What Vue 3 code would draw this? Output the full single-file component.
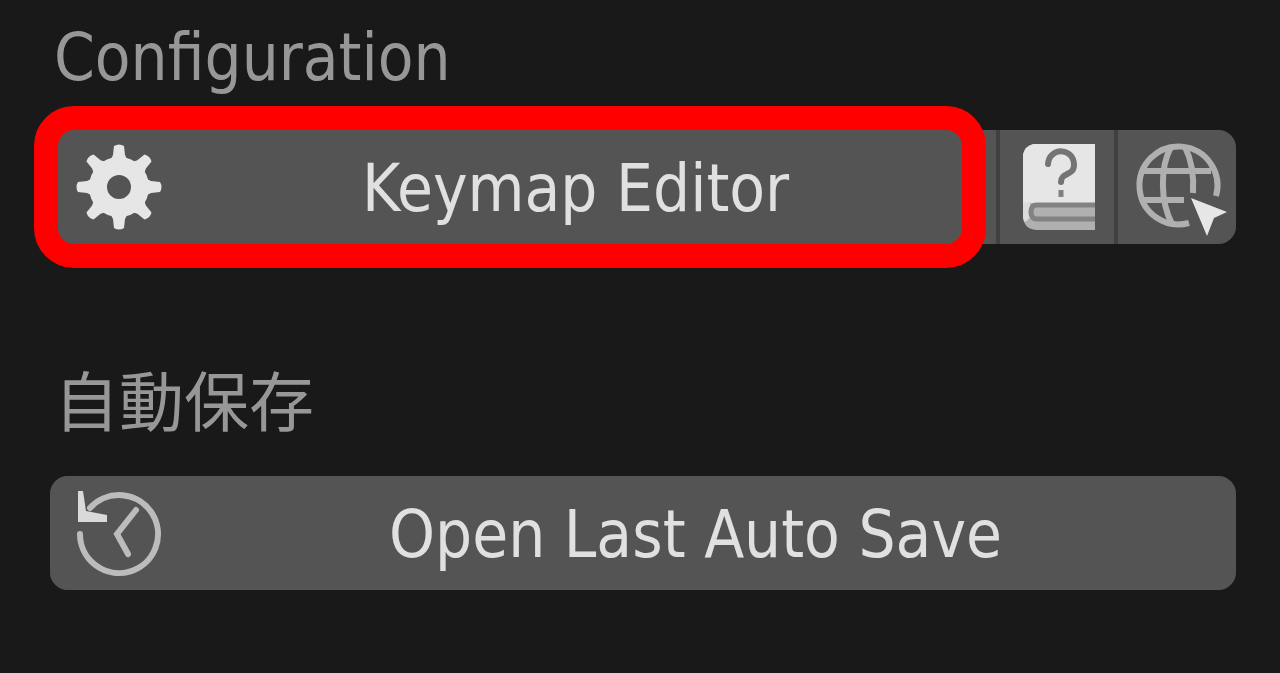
<script setup>
const spokes = [0, 45, 90, 135, 180, 225, 270, 315]
</script>

<template>
  <main class="panel">
    <section class="section">
      <h2 class="heading">Configuration</h2>
      <div class="group">
        <button type="button" class="btn wide marked">
          <svg class="icon" viewBox="0 0 84 84" aria-hidden="true">
            <g fill="#e6e6e6">
              <path
                v-for="angle in spokes"
                :key="angle"
                d="M31 20 L36 10 L37 1 Q42 -2 47 1 L48 10 L53 20 Z"
                :transform="`rotate(${angle} 42 42)`"
              />
            </g>
            <circle cx="42" cy="42" r="21" fill="none" stroke="#e6e6e6" stroke-width="18" />
          </svg>
          <span class="label">Keymap Editor</span>
        </button>
        <button type="button" class="btn book" aria-label="Manual">
          <svg class="icon" viewBox="-2 1 84 84" aria-hidden="true">
            <path d="M16 0 H78 V60 H6 V10 Q8 2 16 0 Z" fill="#e6e6e6" />
            <path d="M6 59 H78 V86 H19 Q7 85 6 73 Z" fill="#b0b0b0" />
            <path d="M6 58 H13 V74 L8 78 Q6 76 6 73 Z" fill="#dcdcdc" />
            <path d="M78 61 H20 Q14 61 14 68 T20 75 H78" fill="none" stroke="#828282" stroke-width="5" />
            <path
              d="M31 20 C32 3 57 3 57 21 C57 32 44 28 44 38"
              fill="none"
              stroke="#747474"
              stroke-width="6"
              stroke-linecap="round"
            />
            <path d="M44 46 V53" stroke="#808080" stroke-width="5" />
          </svg>
        </button>
        <button type="button" class="btn globe" aria-label="Online help">
          <svg class="icon" viewBox="0 4 84 84" aria-hidden="true">
            <g fill="none" stroke="#b0b0b0" stroke-width="6">
              <path d="M81 55 A39 39 0 1 0 54 82" />
              <path d="M36 6 C25 26 25 60 37 83" />
              <path d="M50 6 C57 20 59 36 58 52" />
              <path d="M8 30 H76 M8 59 H49" />
            </g>
            <path d="M56 57 L92 71 L79 77 L72 95 Z" fill="#e6e6e6" />
          </svg>
        </button>
      </div>
    </section>

    <section class="section">
      <h2 class="heading" lang="ja">自動保存</h2>
      <div class="group">
        <button type="button" class="btn wide">
          <svg class="icon" viewBox="0 0 84 84" aria-hidden="true">
            <g fill="none" stroke="#bcbcbc" stroke-width="6" stroke-linecap="round">
              <path d="M13 17 A39 39 0 1 1 3 43" />
              <path d="M59 19 L40 43 L51 63" />
            </g>
            <path d="M1 0 H6 L9 20 L30 24 V31 H1 Z" fill="#dadada" />
          </svg>
          <span class="label">Open Last Auto Save</span>
        </button>
      </div>
    </section>
  </main>
</template>

<style>
html,
body {
  background: #191919;
}
</style>

<style scoped>
.panel {
  box-sizing: border-box;
  min-height: 100vh;
  padding: 18px 44px 0 50px;
  background: #191919;
  font-family: "DejaVu Sans Condensed", "Noto Sans CJK JP", sans-serif;
}
.section {
  margin-bottom: 120px;
}
.section:last-child {
  margin-bottom: 0;
}
.heading {
  margin: 0;
  padding: 0 4px 32px;
  font-size: 65px;
  font-weight: 400;
  line-height: 80px;
  color: #979797;
}
.group {
  display: flex;
  gap: 4px;
  border-radius: 18px;
  background: #404040;
}
.btn {
  display: flex;
  align-items: center;
  justify-content: center;
  height: 114px;
  padding: 0;
  border: 0;
  background: #545454;
  font: inherit;
  font-size: 65px;
  color: #e0e0e0;
  cursor: pointer;
}
.btn:first-child {
  border-radius: 18px 0 0 18px;
}
.btn:last-child {
  border-radius: 0 18px 18px 0;
}
.btn:only-child {
  border-radius: 18px;
}
.wide {
  flex: 1;
  padding: 0 6px 0 27px;
}
.book {
  flex: 0 0 114px;
}
.globe {
  flex: 0 0 118px;
}
.marked {
  position: relative;
}
.marked::after {
  content: "";
  position: absolute;
  inset: -24px 10px -24px -16px;
  border: 24px solid #f00;
  border-radius: 40px;
}
.icon {
  flex: none;
  width: 84px;
  height: 84px;
  overflow: visible;
}
.label {
  flex: 1;
  padding-top: 2px;
  text-align: center;
  white-space: nowrap;
}
</style>
